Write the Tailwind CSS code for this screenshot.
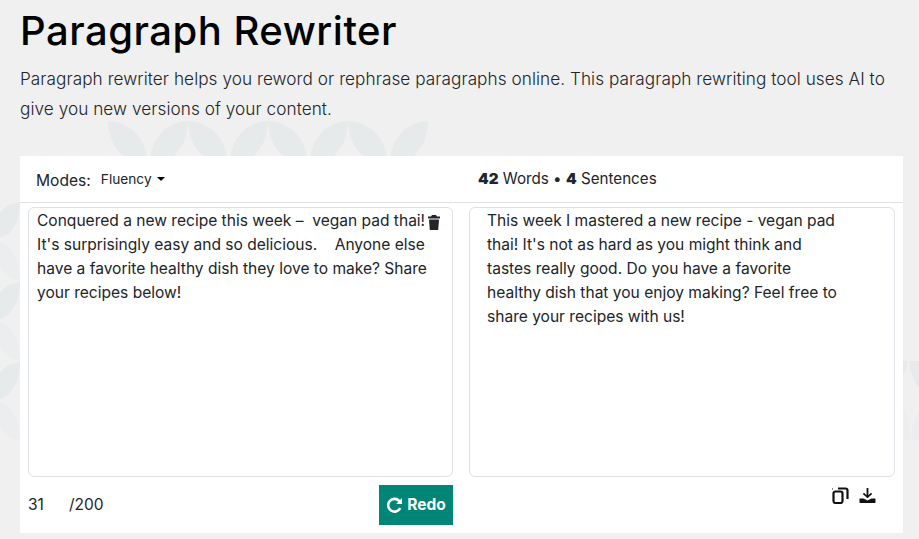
<!DOCTYPE html>
<html lang="en">
  <head>
    <meta charset="UTF-8" />
    <meta name="viewport" content="width=device-width, initial-scale=1.0" />
    <title>Paragraph Rewriter</title>
    <script src="https://cdn.jsdelivr.net/npm/@tailwindcss/browser@4"></script>
  </head>
  <body class="bg-[#f0f0f0] font-['Inter',sans-serif] text-[#212529] overflow-hidden">
    <div class="relative h-[539px] w-[919px] overflow-hidden">
      <!-- leaf pattern behind the card -->
      <svg class="absolute left-0 top-0" width="919" height="539" viewBox="0 0 919 539">
        <g fill="#e7eaeb">
          <path d="M108 121C132 122 148 140 149 170L128 160C114 150 108 136 108 121Z" />
          <path d="M188 121C164 122 149 140 149 170L170 160C182 150 188 136 188 121Z" />
          <path d="M188 121C212 122 228 140 229 170L208 160C194 150 188 136 188 121Z" />
          <path d="M268 121C244 122 229 140 229 170L250 160C262 150 268 136 268 121Z" />
          <path d="M268 121C292 122 308 140 309 170L288 160C274 150 268 136 268 121Z" />
          <path d="M348 121C324 122 309 140 309 170L330 160C342 150 348 136 348 121Z" />
          <path d="M348 121C372 122 388 140 389 170L368 160C354 150 348 136 348 121Z" />
          <path d="M428 121C404 122 389 140 389 170L410 160C422 150 428 136 428 121Z" />
          <path d="M20 202C8 204 0 210 0 214V238C10 236 20 224 20 202Z" />
          <path d="M20 282C8 284 0 290 0 294V319C10 316 20 304 20 282Z" />
          <path d="M20 362C8 364 0 370 0 374V399C10 396 20 384 20 362Z" />
          <path d="M903 361H908C907 368 905 372 903 375Z" />
          <path d="M909 361H919V388C913 380 910 370 909 361Z" />
        </g>
        <g fill="#ebedee">
          <path d="M0 242C10 246 20 258 20 280C10 280 0 270 0 264Z" />
          <path d="M0 322C10 326 20 338 20 360C10 360 0 350 0 344Z" />
          <path d="M0 402C10 406 20 418 20 440C10 440 0 430 0 424Z" />
          <path d="M903 405C907 415 910 428 910 440H903Z" />
          <path d="M919 412C914 420 911 430 911 440H919Z" />
        </g>
      </svg>

      <div class="relative pl-5 pr-4 pt-[7px]">
        <h1 class="text-[40px] leading-[48px] font-medium text-black tracking-[0.5px]">Paragraph Rewriter</h1>
        <p class="mt-[9px] text-[17.2px] leading-[30px] font-light text-[#212529] tracking-[0.05px] w-[880px]">
          Paragraph rewriter helps you reword or rephrase paragraphs online. This paragraph rewriting tool uses AI to give you new versions of your content.
        </p>

        <section class="mt-[32px] bg-white h-[377px]">
          <div class="grid grid-cols-[441px_1fr] h-[47px] border-b border-[#dee2e6] items-center">
            <div class="flex items-center pl-4">
              <span class="text-[15.6px] mr-[10px] pt-[4px]">Modes:</span>
              <button class="flex items-center text-[13.7px] gap-[5px] pt-[1px]">
                Fluency
                <span class="border-x-4 border-t-4 border-x-transparent border-t-black"></span>
              </button>
            </div>
            <div class="text-[15.2px] pl-[17px]">
              <b class="font-black">42</b> Words • <b class="font-black">4</b> Sentences
            </div>
          </div>

          <div class="grid grid-cols-[425px_426px] gap-4 px-2 pt-1">
            <div class="relative h-[270px] rounded-md border border-[#dee2e6] pl-2 pr-5 pt-[1px] text-[15.55px] leading-6">
              Conquered a new recipe this week – &nbsp;vegan pad thai! It's surprisingly easy and so delicious. &nbsp; &nbsp;Anyone else have a favorite healthy dish they love to make? Share your recipes below!
              <svg class="absolute left-[399px] top-[7px]" width="12" height="15" viewBox="0 0 12 15" fill="#212529">
                <path d="M4 0H8L9 1.5H12V3.5H0V1.5H3Z" />
                <path d="M1 4.5H11L10.2 15H1.8Z" />
              </svg>
            </div>
            <div class="h-[270px] rounded-md border border-[#dee2e6] pl-[17px] pr-[50px] pt-[1px] text-[15.55px] leading-6">
              This week I mastered a new recipe - vegan pad thai! It's not as hard as you might think and tastes really good. Do you have a favorite healthy dish that you enjoy making? Feel free to share your recipes with us!
            </div>
          </div>

          <div class="grid grid-cols-[425px_426px] gap-4 px-2 pt-[8px]">
            <div class="flex items-center justify-between">
              <div class="text-[15.5px]"><span class="inline-block w-[41px]">31</span>/200</div>
              <button class="flex h-10 w-[74px] items-center justify-center gap-1 bg-[#008577] text-[15.5px] font-bold text-white">
                <svg width="17" height="17" viewBox="0 0 16 16" fill="none" stroke="white" stroke-width="2.4">
                  <path d="M13.4 10.5A6 6 0 1 1 12.4 3.6L14 5.2" />
                  <path d="M15 1V6.5H9.5" fill="white" stroke="none" />
                </svg>
                Redo
              </button>
            </div>
            <div class="flex items-start justify-end gap-[10px] pr-[19px] pt-[2px]">
              <svg width="17" height="17" viewBox="0 0 17 17" fill="none" stroke="#111" stroke-width="2.2">
                <rect x="1.5" y="4.5" width="9" height="11.5" rx="2" />
                <path d="M6 1.5H13.5A2 2 0 0 1 15.5 3.5V12" />
                <path d="M0 2H1" stroke-width="1" />
              </svg>
              <svg width="17" height="17" viewBox="0 0 17 17" fill="#111">
                <path d="M7.6 1H9.4V8.2L12 5.7L13.2 6.9L8.5 11.2L3.8 6.9L5 5.7L7.6 8.2Z" />
                <path d="M0.5 11.5H4.5L8.5 13.5L12.5 11.5H16A1 1 0 0 1 16.5 12.5V15A0.8 0.8 0 0 1 15.7 16H1.3A0.8 0.8 0 0 1 0.5 15.2Z" />
              </svg>
            </div>
          </div>
        </section>
      </div>
    </div>
  </body>
</html>
